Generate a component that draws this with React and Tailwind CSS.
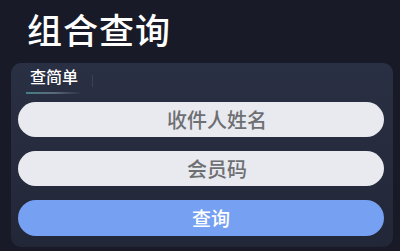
import { useState } from "react";

const font = { fontFamily: '"Noto Sans CJK SC", "Noto Sans", sans-serif' };

export default function App() {
  const [name, setName] = useState("");
  const [code, setCode] = useState("");

  return (
    <div
      className="w-[400px] h-[251px] overflow-hidden bg-[#181b27] pt-[11px]"
      style={font}
    >
      <h1 className="pl-[27px] text-[35px] leading-none font-medium tracking-[1px] text-white">组合查询</h1>

      <div className="mt-[17px] ml-[11px] w-[382px] h-[184px] rounded-[10px] bg-gradient-to-b from-[#2a3043] to-[#222738] pt-[6px] pl-[7px] pr-[9px]">
        <div className="flex items-start">
          <div className="ml-[8px] w-[56px] flex flex-col items-center">
            <span className="text-[16px] leading-[15px] font-medium text-white">查简单</span>
            <div className="mt-[8px] h-[2px] w-full bg-gradient-to-r from-[#3f7f8a] via-[#5a6a78] to-transparent" />
          </div>
          <div className="ml-[10px] mt-[6px] h-[12px] w-px bg-[#3a4152]" />
        </div>

        <div className="mt-[8px] flex flex-col gap-[14px]">
          <input
            value={name}
            onChange={(e) => setName(e.target.value)}
            placeholder="收件人姓名"
            className="h-[35px] w-full rounded-full bg-[#e9eaef] pl-[32px] text-center text-[20px] font-medium text-[#333] placeholder:text-[#6e6f73] outline-none"
          />
          <input
            value={code}
            onChange={(e) => setCode(e.target.value)}
            placeholder="会员码"
            className="h-[35px] w-full rounded-full bg-[#e9eaef] pl-[32px] text-center text-[20px] font-medium text-[#333] placeholder:text-[#6e6f73] outline-none"
          />
          <button
            type="button"
            className="h-[36px] w-full rounded-full bg-[#76a0f2] pl-[20px] text-[19px] font-medium text-white"
          >
            查询
          </button>
        </div>
      </div>
    </div>
  );
}
